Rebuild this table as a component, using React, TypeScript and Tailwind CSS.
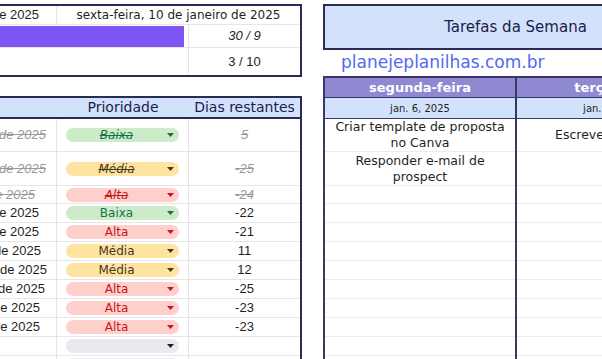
import React from "react";

const rounded = "font-['DejaVu_Sans',sans-serif]";
const arial = "font-['Liberation_Sans',Arial,sans-serif]";

type Prio = "Baixa" | "Média" | "Alta" | "";

const prioStyle: Record<string, string> = {
  Baixa: "bg-[#cdebc9] text-[#11734b]",
  Média: "bg-[#ffe3a1] text-[#473821]",
  Alta: "bg-[#ffd0cb] text-[#c5161d]",
  "": "bg-[#e8eaed] text-[#1f1f1f]",
};

// linhas da planilha (altura inclui a linha de grade)
const rows: {
  h: string;
  date: string;
  pr: string;
  prio: Prio;
  days: string;
  done?: boolean;
}[] = [
  { h: "h-[33px]", date: "15 de janeiro de 2025", pr: "pr-[10px]", prio: "Baixa", days: "5", done: true },
  { h: "h-[34px]", date: "16 de dezembro de 2025", pr: "pr-[10px]", prio: "Média", days: "-25", done: true },
  { h: "h-[18px]", date: "17 de dezembro de 2025", pr: "pr-[21px]", prio: "Alta", days: "-24", done: true },
  { h: "h-[19px]", date: "19 de dezembro de 2025", pr: "pr-[17px]", prio: "Baixa", days: "-22" },
  { h: "h-[19px]", date: "20 de dezembro de 2025", pr: "pr-[17px]", prio: "Alta", days: "-21" },
  { h: "h-[19px]", date: "21 de janeiro de 2025", pr: "pr-[15px]", prio: "Média", days: "11" },
  { h: "h-[19px]", date: "22 de janeiro de 2025", pr: "pr-[9px]", prio: "Média", days: "12" },
  { h: "h-[19px]", date: "16 de dezembro de 2025", pr: "pr-[11px]", prio: "Alta", days: "-25" },
  { h: "h-[19px]", date: "18 de dezembro de 2025", pr: "pr-[16px]", prio: "Alta", days: "-23" },
  { h: "h-[19px]", date: "18 de dezembro de 2025", pr: "pr-[16px]", prio: "Alta", days: "-23" },
  { h: "h-[19px]", date: "", pr: "pr-[10px]", prio: "", days: "" },
  { h: "h-[19px]", date: "", pr: "pr-[10px]", prio: "", days: "" },
];

const monday = ["Criar template de proposta no Canva", "Responder e-mail de prospect"];
const tuesday = ["Escrever post blog"];

function Caret() {
  return (
    <svg width="7" height="4" viewBox="0 0 7 4" className="shrink-0">
      <path d="M0 0h7L3.5 4z" fill="currentColor" />
    </svg>
  );
}

function Chip({ prio, done }: { prio: Prio; done?: boolean }) {
  return (
    <div
      className={`ml-[9px] flex h-[14px] w-[113px] items-center rounded-full pr-[5px] ${prioStyle[prio]}`}
    >
      <span
        className={`flex-1 text-center text-[12px] leading-none ${rounded} ${
          done ? "italic line-through" : ""
        }`}
      >
        {prio}
      </span>
      <Caret />
    </div>
  );
}

function LeftPanel() {
  return (
    <div className="w-[302px] shrink-0 pt-[4px]">
      {/* resumo */}
      <div className="border-y-2 border-r-2 border-[#2c2a58]">
        <div className="flex h-[19px] border-b border-[#e6e6e6]">
          <div
            className={`flex w-[57px] items-center justify-end overflow-hidden whitespace-nowrap border-r border-[#e6e6e6] pr-[17px] text-[13px] text-[#1f1f1f] ${arial}`}
          >
            10 de janeiro de 2025
          </div>
          <div
            className={`flex flex-1 items-center justify-center text-[12px] text-[#1f1f1f] ${rounded}`}
          >
            sexta-feira, 10 de janeiro de 2025
          </div>
        </div>
        <div className="flex h-[23px] border-b border-[#e6e6e6]">
          <div className="w-[189px] border-r border-[#e6e6e6] pr-[4px] pt-[1px]">
            <div className="h-[21px] bg-[#7f56f5]" />
          </div>
          <div
            className={`flex flex-1 items-center justify-center text-[13px] italic text-[#1f1f1f] ${arial}`}
          >
            30 / 9
          </div>
        </div>
        <div className="flex h-[27px]">
          <div className="w-[189px] border-r border-[#e6e6e6]" />
          <div
            className={`flex flex-1 items-center justify-center text-[13px] text-[#1f1f1f] ${arial}`}
          >
            3 / 10
          </div>
        </div>
      </div>

      {/* tarefas */}
      <div className="mt-[19px] border-r-2 border-[#2c2a58]">
        <div
          className={`flex h-[23px] border-y-2 border-[#2c2a58] bg-[#d3e2fb] text-[14px] text-[#1d1b4b] ${rounded}`}
        >
          <div className="w-[57px]" />
          <div className="flex w-[132px] items-center justify-center">Prioridade</div>
          <div className="flex flex-1 items-center justify-center">Dias restantes</div>
        </div>
        {rows.map((r, i) => (
          <div key={i} className={`flex border-b border-[#e6e6e6] ${r.h}`}>
            <div
              className={`flex w-[57px] items-center justify-end overflow-hidden whitespace-nowrap border-r border-[#e6e6e6] text-[13px] ${arial} ${r.pr} ${
                r.done ? "italic text-[#9a9a9a] line-through" : "text-[#1f1f1f]"
              }`}
            >
              {r.date}
            </div>
            <div className="flex w-[132px] items-center border-r border-[#e6e6e6]">
              <Chip prio={r.prio} done={r.done} />
            </div>
            <div
              className={`flex flex-1 items-center justify-center text-[13px] ${arial} ${
                r.done ? "italic text-[#9a9a9a] line-through" : "text-[#1f1f1f]"
              }`}
            >
              {r.days}
            </div>
          </div>
        ))}
      </div>
    </div>
  );
}

function DayColumn({
  name,
  date,
  tasks,
  width,
}: {
  name: string;
  date: string;
  tasks: string[];
  width: string;
}) {
  return (
    <div className={`shrink-0 border-l-2 border-[#3a3669] ${width}`}>
      <div
        className={`flex h-[20px] items-center justify-center border-b border-[#3a3669] bg-[#8e89d1] text-[13px] font-bold text-white ${rounded}`}
      >
        {name}
      </div>
      <div
        className={`flex h-[21px] items-center justify-center border-b border-[#3a3669] bg-[#d3e2fb] text-[10px] text-[#1f1f1f] ${rounded}`}
      >
        {date}
      </div>
      {rows.map((r, i) => (
        <div
          key={i}
          className={`flex items-center justify-center border-b border-[#ececec] px-[3px] text-center text-[12.5px] leading-[16px] text-[#1f1f1f] ${rounded} ${r.h}`}
        >
          {tasks[i] ?? ""}
        </div>
      ))}
    </div>
  );
}

function RightPanel() {
  return (
    <div className="ml-[21px] w-[420px] shrink-0 pt-[4px]">
      <div
        className={`flex h-[46px] w-[385px] items-center justify-center border-2 border-[#2c2a58] bg-[#d3e2fb] text-[15px] text-[#1d1b4b] ${rounded}`}
      >
        Tarefas da Semana
      </div>
      <div
        className={`flex h-[26px] items-center pl-[18px] text-[17px] text-[#5468f2] ${rounded}`}
      >
        planejeplanilhas.com.br
      </div>
      <div className="flex border-t-2 border-[#3a3669]">
        <DayColumn name="segunda-feira" date="jan. 6, 2025" tasks={monday} width="w-[192px]" />
        <DayColumn name="terça-feira" date="jan. 7, 2025" tasks={tuesday} width="w-[194px]" />
      </div>
    </div>
  );
}

export default function App() {
  return (
    <div className="flex h-[359px] w-[602px] items-start overflow-hidden bg-white">
      <LeftPanel />
      <RightPanel />
    </div>
  );
}
